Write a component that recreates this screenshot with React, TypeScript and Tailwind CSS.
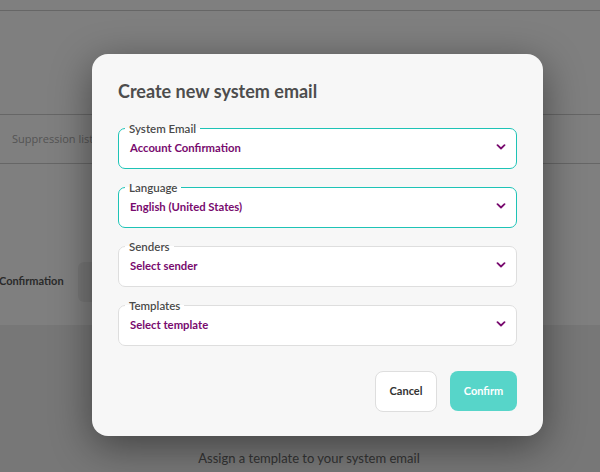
import React from 'react';

const Chevron = () => (
  <svg width="10" height="6" viewBox="0 0 10 6" className="shrink-0">
    <path d="M1.5 1.2 L5 4.5 L8.5 1.2" fill="none" stroke="#780a6e" strokeWidth="1.8" strokeLinecap="round" strokeLinejoin="round" />
  </svg>
);

type FieldProps = { label: string; value: string; active?: boolean };

const SelectField = ({ label, value, active }: FieldProps) => (
  <fieldset
    className={`m-0 rounded-[7px] border bg-white px-[6px] ${active ? 'border-[#1ec3b6]' : 'border-[#dedede]'}`}
  >
    <legend className="px-1 text-[11.5px] font-semibold leading-[13px] text-[#4a4a4a]">{label}</legend>
    <div className="flex h-[33px] items-start justify-between pl-[5px] pr-[4px] pt-[6px]">
      <span className="text-[11.3px] font-bold leading-[13px] text-[#780a6e]">{value}</span>
      <div className="pt-[3px]">
        <Chevron />
      </div>
    </div>
  </fieldset>
);

const Background = () => (
  <div className="flex h-[472px] flex-col bg-white font-['Lato',sans-serif]">
    <div className="h-[11px] border-b border-[#cccccc]" />
    <div className="h-[104px] border-b border-[#cccccc]" />
    <div className="flex h-[49px] items-center border-b border-[#cccccc] pl-3">
      <span className="font-['Open_Sans',sans-serif] text-[11px] text-[#a9a9a9]">Suppression list</span>
    </div>
    <div className="flex h-[161px] items-start gap-[14px] pt-[98px]">
      <span className="-ml-[1px] mt-[11px] text-[11px] font-bold text-[#555555]">Confirmation</span>
      <div className="h-[40px] w-[200px] rounded-[6px] bg-[#efefef]" />
    </div>
    <div className="flex flex-1 flex-col items-center bg-[#eeeeee] pl-[18px] pt-[88px]">
      <h3 className="text-[18px] font-bold leading-[22px] text-[#444444]">Create your first email</h3>
      <p className="mt-[14px] text-[13px] text-[#666666]">Assign a template to your system email</p>
    </div>
  </div>
);

export default function App() {
  return (
    <div className="relative h-[472px] w-[600px] overflow-hidden">
      <Background />
      <div className="absolute inset-0 bg-black/50 pl-[92px] pt-[54px]">
        <div className="flex w-[451px] flex-col rounded-[16px] bg-[#f7f7f7] px-[26px] pb-[24px] pt-[26px] font-['Lato',sans-serif] shadow-[0_10px_40px_rgba(0,0,0,0.45)]">
          <h2 className="text-[18px] font-bold leading-[22px] text-[#4d4d4d]">Create new system email</h2>
          <div className="mt-[20px] flex flex-col gap-[12px]">
            <SelectField label="System Email" value="Account Confirmation" active />
            <SelectField label="Language" value="English (United States)" active />
            <SelectField label="Senders" value="Select sender" />
            <SelectField label="Templates" value="Select template" />
          </div>
          <div className="mt-[25px] flex justify-end gap-[13px]">
            <button className="h-[41px] w-[62px] rounded-[8px] border border-[#dedede] bg-white text-[11px] font-bold text-[#333333]">
              Cancel
            </button>
            <button className="h-[40px] w-[67px] rounded-[8px] bg-[#57d5c9] text-[11px] font-bold text-white">
              Confirm
            </button>
          </div>
        </div>
      </div>
    </div>
  );
}
